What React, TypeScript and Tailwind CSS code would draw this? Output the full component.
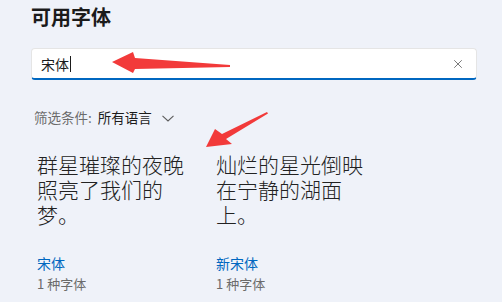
import { X } from "lucide-react";

const fonts = [
  { sample: "群星璀璨的夜晚照亮了我们的梦。", name: "宋体", count: "1 种字体" },
  { sample: "灿烂的星光倒映在宁静的湖面上。", name: "新宋体", count: "1 种字体" },
];

const uiFont = { fontFamily: '"Noto Sans CJK SC", "Noto Sans", sans-serif' };

export default function App() {
  return (
    <div className="relative w-[502px] h-[302px] overflow-hidden bg-[#eff2f9] pl-[31px] text-[#1b1b1b]" style={uiFont}>
      <h2 className="pt-[3px] text-[20px] leading-[28px] font-semibold">可用字体</h2>

      {/* search box */}
      <div className="mt-[17px] w-[446px] h-[32px] flex items-center bg-white rounded-[4px] border border-[#e5e5e5] border-b-2 border-b-[#0067c0] pl-[9px] pr-[11px]">
        <span className="text-[14px] leading-[20px]">宋体</span>
        <span className="ml-[1px] w-px h-[16px] bg-[#1b1b1b]" />
        <div className="flex-1" />
        <X className="w-[14px] h-[14px] text-[#5c5c5c]" strokeWidth={1.4} />
      </div>

      {/* filter */}
      <div className="mt-[27px] pl-[3px] flex items-center text-[13.5px] leading-[20px]">
        <span className="text-[#6b6b6b]">筛选条件:</span>
        <span className="ml-[6px] text-[#1b1b1b]">所有语言</span>
        <svg className="ml-[10px] mt-[2px]" width="12" height="7" viewBox="0 0 12 7" fill="none">
          <path d="M0.5 0.8 L6 6 L11.5 0.8" stroke="#5c5c5c" strokeWidth="1.1" />
        </svg>
      </div>

      {/* font cards */}
      <div className="mt-[25px] pl-[6px] grid grid-cols-[179px_179px]">
        {fonts.map((f) => (
          <div key={f.name} className="flex flex-col">
            <p className="w-[150px] h-[75px] text-[21px] leading-[25px] font-light text-[#222]">{f.sample}</p>
            <span className="mt-[26px] text-[14px] leading-[20px] text-[#0067c0]">{f.name}</span>
            <span className="mt-px text-[13px] leading-[19px] text-[#6b6b6b]">{f.count}</span>
          </div>
        ))}
      </div>

      {/* annotation arrows */}
      <svg className="absolute left-0 top-0 pointer-events-none" width="502" height="302" viewBox="0 0 502 302">
        <polygon points="112,62 133,52 135,58 230,65 230,67 135,69 133,73" fill="#f23a3a" />
        <polygon points="206,147 215,129 222,134 267,112 268,113.5 226,139 232,144" fill="#f23a3a" />
      </svg>
    </div>
  );
}
